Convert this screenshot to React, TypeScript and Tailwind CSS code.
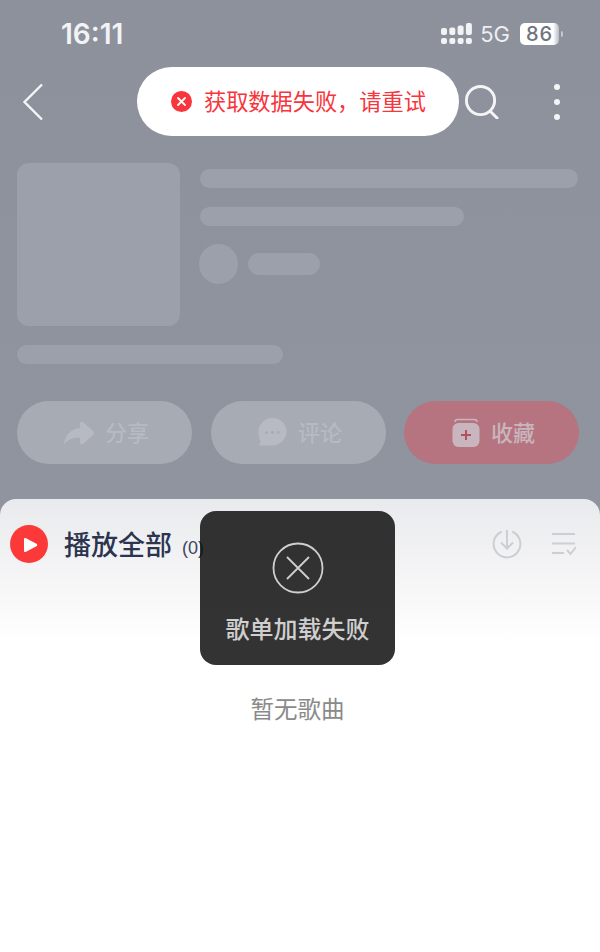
import React from "react";

const cjk = "font-['Noto_Sans_CJK_SC','Noto_Sans',sans-serif]";

function Signal() {
  return (
    <svg width="31" height="22" viewBox="0 0 31 22" fill="#f2f3f5">
      <rect x="0" y="5" width="6" height="7" rx="2" />
      <rect x="8.300" y="4.500" width="6" height="7.500" rx="2" />
      <rect x="16.600" y="2.500" width="6" height="9.500" rx="2" />
      <rect x="24.900" y="0" width="6" height="12" rx="2" />
      <rect x="0" y="15" width="6" height="6" rx="2" />
      <rect x="8.300" y="15" width="6" height="6" rx="2" />
      <rect x="16.600" y="15" width="6" height="6" rx="2" />
      <rect x="24.900" y="15" width="6" height="6" rx="2" />
    </svg>
  );
}

function ActionButton({ icon, label, tone }: { icon: React.ReactNode; label: string; tone: "gray" | "red" }) {
  return (
    <div
      className={`flex h-[63px] w-[175px] items-center justify-center gap-[11px] rounded-[32px] pl-[4px] ${
        tone === "red" ? "bg-[#b5747f]" : "bg-[#a7abb4]"
      }`}
    >
      {icon}
      <span className={`mb-[3px] text-[22px] font-medium leading-none ${tone === "red" ? "text-[#c9b5bd]" : "text-[#b7bac3]"}`}>{label}</span>
    </div>
  );
}

export default function App() {
  return (
    <div className={`relative flex h-[952px] w-[600px] flex-col overflow-hidden bg-gradient-to-b from-[#8d919c] to-[#9397a1] ${cjk}`}>
      <div className="flex h-[67px] items-start justify-between pl-[61px] pr-[37px] pt-[18px]">
        <span className="font-['Inter',sans-serif] text-[28px] font-semibold leading-[33px] text-[#f2f3f5]">16:11</span>
        <div className="mt-[4px] flex items-center gap-[9px]">
          <Signal />
          <span className="-ml-px font-['Inter',sans-serif] text-[22px] leading-[24px] text-[#eceef0]">5G</span>
          <div className="flex items-center gap-[2px]">
            <div className="ml-px flex h-[22px] w-[39px] items-center justify-center rounded-[5px] bg-[linear-gradient(90deg,#fff_0%,#fff_85%,#b9bcc4_100%)] font-['Inter',sans-serif] text-[20px] font-medium tracking-[1px] text-[#6f7480]">
              86
            </div>
            <div className="h-[6px] w-[2px] rounded-r-full bg-[#c5c8cf]" />
          </div>
        </div>
      </div>

      <div className="flex h-[69px] items-center pl-[22px] pr-[40px]">
        <svg width="22" height="38" viewBox="0 0 22 38" fill="none" stroke="#f4f5f6" strokeWidth="2.4">
          <path d="M20 1.5 2.5 19 20 36.5" />
        </svg>
        <div className="flex-1" />
        <svg width="35" height="35" viewBox="0 0 36 36" fill="none" stroke="#f4f5f6" strokeWidth="3">
          <circle cx="17" cy="17" r="14.5" />
          <path d="m27 28 7 7" strokeLinecap="round" />
        </svg>
        <div className="ml-[55px] flex h-[38px] flex-col justify-between py-[1px]">
          <div className="size-[6px] rounded-full bg-[#f4f5f6]" />
          <div className="size-[6px] rounded-full bg-[#f4f5f6]" />
          <div className="size-[6px] rounded-full bg-[#f4f5f6]" />
        </div>
      </div>

      <div className="flex gap-[20px] pl-[17px] pr-[22px] pt-[27px]">
        <div className="h-[163px] w-[163px] shrink-0 rounded-[12px] bg-[#9ca0ab]" />
        <div className="flex flex-1 flex-col pt-[6px]">
          <div className="h-[19px] rounded-[10px] bg-[#9ca0ab]" />
          <div className="mt-[19px] h-[19px] w-[264px] rounded-[10px] bg-[#9ca0ab]" />
          <div className="-ml-px mt-[18px] flex items-center gap-[10px]">
            <div className="h-[40px] w-[39px] rounded-full bg-[#9ca0ab]" />
            <div className="h-[22px] w-[72px] rounded-[11px] bg-[#9ca0ab]" />
          </div>
        </div>
      </div>

      <div className="ml-[17px] mt-[19px] h-[19px] w-[266px] rounded-[10px] bg-[#9ca0ab]" />

      <div className="flex justify-between pl-[17px] pr-[21px] pt-[37px]">
        <ActionButton
          tone="gray"
          label="分享"
          icon={
            <svg width="30" height="24" viewBox="0 0 30 24" fill="#b7bac3">
              <path d="M16 2Q17 0 19 1L29 10Q31 12 29 14L19 23Q17 24 16 22L16 17C10 16 5 18 0 23 1 14 7 8 16 7Z" />
            </svg>
          }
        />
        <ActionButton
          tone="gray"
          label="评论"
          icon={
            <svg width="29" height="29" viewBox="0 0 30 30">
              <path fill="#b7bac3" d="M15 0c8 0 14.500 6.300 14.500 14S23 28.500 15 28.500H3c-1.500 0-2-1.500-1-2.500l1-1.500C1.200 22 .5 18 .5 14 .5 6.300 7 0 15 0Z" />
              <circle cx="9" cy="15" r="1.600" fill="#a7abb4" />
              <circle cx="15" cy="15" r="1.600" fill="#a7abb4" />
              <circle cx="21" cy="15" r="1.600" fill="#a7abb4" />
            </svg>
          }
        />
        <ActionButton
          tone="red"
          label="收藏"
          icon={
            <svg width="28" height="29" viewBox="0 0 28 29">
              <path fill="none" stroke="#c9b5bd" strokeWidth="1.500" d="M3 4c0-1.500 1-2.500 2.500-2.500h17C24 1.500 25 2.500 25 4" />
              <rect x="0.500" y="5" width="27" height="24" rx="6" fill="#c9b5bd" />
              <path stroke="#b5505f" strokeWidth="2" d="M14 12v10M9 17h10" />
            </svg>
          }
        />
      </div>

      <div className="mt-[35px] flex-1 rounded-t-[16px] bg-[linear-gradient(180deg,#e9eaed_0px,#f6f6f7_85px,#fff_145px)]">
        <div className="flex h-[90px] items-center pl-[10px] pr-[24px]">
          <svg width="38" height="38" viewBox="0 0 38 38">
            <circle cx="19" cy="19" r="19" fill="#fb3939" />
            <path d="M14 14.300c0-1 1-1.600 2-1l10.500 5.500c1 .6 1 1.800 0 2.400L16 26.700c-1 .6-2 0-2-1Z" fill="#fff" />
          </svg>
          <span className="mb-[2px] ml-[16px] text-[27px] font-medium leading-none text-[#2c3550]">播放全部</span>
          <span className="ml-[10px] mt-[7px] font-['Liberation_Sans',sans-serif] text-[18px] leading-none text-[#3d4560]">(0)</span>
          <div className="flex-1" />
          <svg width="30" height="30" viewBox="0 0 30 30" fill="none" stroke="#cdced1" strokeWidth="2">
            <path d="M9 3A13.400 13.400 0 1 0 21 3" strokeLinecap="round" />
            <path d="M15 1v18M9 13.500 15 19.500l6-6" />
          </svg>
          <svg className="ml-[29px]" width="25" height="24" viewBox="0 0 25 24" fill="none" stroke="#cdced1" strokeWidth="2">
            <path d="M1 2h23M1 11.500h23M1 21h12M16 18l3.500 4L25 15" />
          </svg>
        </div>
        <p className="mt-[102px] pr-[5px] text-center text-[23.500px] leading-[34px] text-[#8a8a8a]">暂无歌曲</p>
      </div>

      <div className="absolute left-[137px] top-[67px] flex h-[69px] w-[322px] items-center rounded-[35px] bg-white pl-[34px]">
        <svg width="21" height="21" viewBox="0 0 21 21">
          <circle cx="10.500" cy="10.500" r="10.500" fill="#f8343c" />
          <path d="m7 7 7 7M14 7l-7 7" stroke="#fff" strokeWidth="1.800" strokeLinecap="round" />
        </svg>
        <span className="mb-[3px] ml-[12px] text-[22.200px] leading-none text-[#f8343c]">获取数据失败，请重试</span>
      </div>

      <div className="absolute left-[200px] top-[511px] flex h-[154px] w-[195px] flex-col items-center rounded-[16px] bg-[#0f0f0f]/[0.85] pt-[31px]">
        <svg width="52" height="52" viewBox="0 0 52 52" fill="none" stroke="#cfcfcf" strokeWidth="1.800">
          <circle cx="26" cy="26" r="24.500" />
          <path d="m15 15 22 22M37 15 15 37" />
        </svg>
        <span className="mt-[17px] text-[24px] font-medium leading-[34px] text-[#cfcfcf]">歌单加载失败</span>
      </div>
    </div>
  );
}
